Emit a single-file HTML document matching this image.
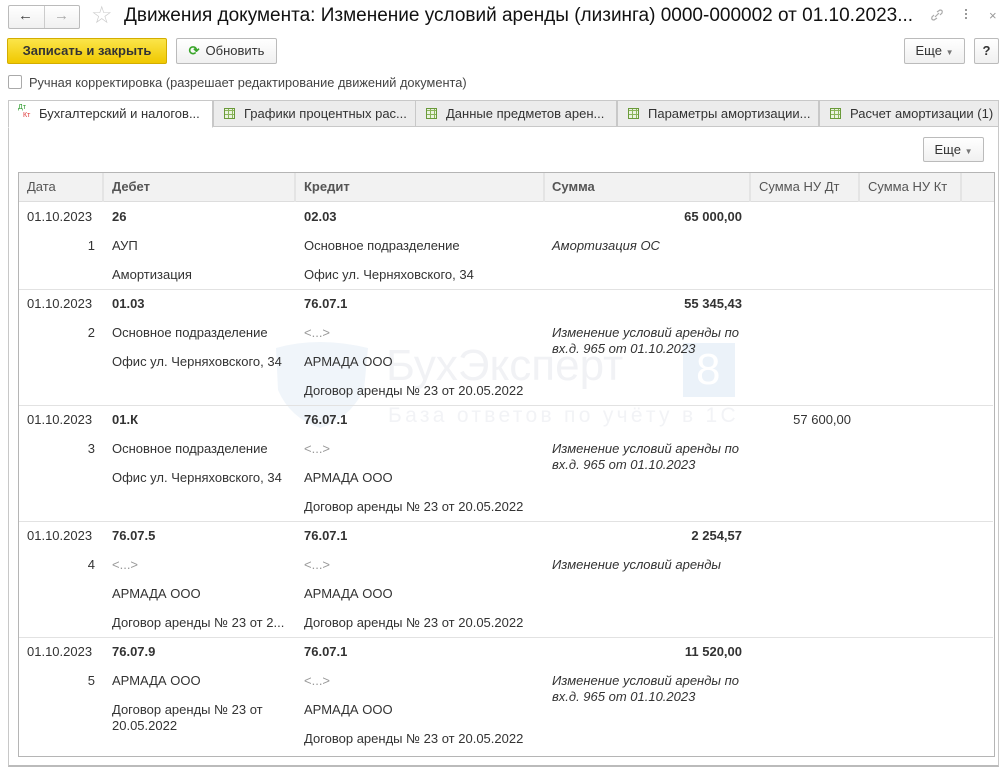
<!DOCTYPE html>
<html><head><meta charset="utf-8"><style>
*{box-sizing:border-box;margin:0;padding:0}
body{width:1006px;height:770px;background:#fff;font-family:"Liberation Sans",Arial,sans-serif;font-size:13px;color:#333;position:relative;overflow:hidden}
.a{position:absolute;white-space:nowrap;line-height:15px}
.b{font-weight:bold}
.i{font-style:italic}
.g{color:#999}
.r{text-align:right}
.btn{position:absolute;border:1px solid #bbb;border-radius:2px;background:linear-gradient(#fff,#f0f0f0);font-size:13px;color:#333;line-height:22px;text-align:center}
.tab{position:absolute;top:100px;height:27px;border:1px solid #c8c8c8;background:#ececec;font-size:13px;line-height:25px;padding-left:10px;color:#333;white-space:nowrap}
.tico{display:inline-block;width:11px;height:11px;border:1px solid #6a9a3a;margin-right:9px;vertical-align:-1px;background:repeating-linear-gradient(90deg,transparent 0 3px,#8ab45a 3px 4px),repeating-linear-gradient(0deg,#eaf3df 0 3px,#8ab45a 3px 4px)}
.hl{position:absolute;top:173px;height:29px;border-right:2px solid #e4e4e4}
.sep{position:absolute;left:19px;width:974px;height:1px;background:#e2e2e2}
</style></head><body>
<!-- header -->
<div class="btn" style="left:8px;top:5px;width:72px;height:24px"></div>
<div style="position:absolute;left:44px;top:6px;width:1px;height:22px;background:#ccc"></div>
<div class="a" style="left:18px;top:8px;font-size:15px;color:#444">&#8592;</div>
<div class="a" style="left:54px;top:8px;font-size:15px;color:#aaa">&#8594;</div>
<div class="a" style="left:91px;top:3px;font-size:24px;color:#ccc;line-height:26px">☆</div>
<div class="a" style="left:124px;top:4px;font-size:19px;line-height:23px;color:#111">Движения документа: Изменение условий аренды (лизинга) 0000-000002 от 01.10.2023...</div>
<svg style="position:absolute;left:929px;top:7px" width="16" height="16"><path d="M6 10 L10 6 M5 8 L3 10 Q2 13 5 13 L8 11 M11 8 L13 6 Q14 3 11 3 L8 5" stroke="#aaa" fill="none" stroke-width="1.2"/></svg>
<div style="position:absolute;left:965px;top:9px;width:2px;height:2px;background:#999;box-shadow:0 4px #999,0 8px #999"></div>
<div class="a" style="left:989px;top:8px;font-size:13px;color:#999">×</div>

<div class="btn b" style="left:7px;top:38px;width:160px;height:26px;background:linear-gradient(#fbe54a,#f0c800);border-color:#d3ad00;line-height:24px;color:#333">Записать и закрыть</div>
<div class="btn" style="left:176px;top:38px;width:101px;height:26px;line-height:24px"><span style="color:#3aa52a;font-weight:bold;margin-right:6px">⟳</span>Обновить</div>
<div class="btn" style="left:904px;top:38px;width:61px;height:26px;line-height:24px">Еще <span style="font-size:8px;color:#777">▼</span></div>
<div class="btn b" style="left:974px;top:38px;width:25px;height:26px;line-height:24px">?</div>

<div style="position:absolute;left:8px;top:75px;width:14px;height:14px;border:1px solid #aaa;border-radius:2px;background:#fff"></div>
<div class="a" style="left:29px;top:75px;font-size:12.8px;color:#444;line-height:15px">Ручная корректировка (разрешает редактирование движений документа)</div>

<!-- tabs -->
<div style="position:absolute;left:8px;top:126px;width:991px;height:641px;border:1px solid #c8c8c8;border-bottom:2px solid #bbb"></div>
<div class="tab" style="left:8px;width:205px;background:#fff;border-bottom-color:#fff;height:28px"><span style="position:absolute;left:9px;top:3px;font-size:7px;line-height:8px;color:#2a9a2a">Дт</span><span style="position:absolute;left:14px;top:11px;font-size:7px;line-height:8px;color:#d33">Кт</span><span style="margin-left:20px">Бухгалтерский и налогов...</span></div>
<div class="tab" style="left:213px;width:203px"><span class="tico"></span>Графики процентных рас...</div>
<div class="tab" style="left:415px;width:202px"><span class="tico"></span>Данные предметов арен...</div>
<div class="tab" style="left:617px;width:202px"><span class="tico"></span>Параметры амортизации...</div>
<div class="tab" style="left:819px;width:180px"><span class="tico"></span>Расчет амортизации (1)</div>

<div class="btn" style="left:923px;top:137px;width:61px;height:25px;line-height:23px">Еще <span style="font-size:8px;color:#777">▼</span></div>

<!-- watermark -->
<svg style="position:absolute;left:268px;top:340px" width="110" height="90"><path d="M8 8 Q50 -4 100 8 L96 50 Q80 80 52 88 Q22 78 10 50 Z" fill="#f0f5fa"/></svg>
<div class="a" style="left:386px;top:341px;font-size:44px;line-height:50px;color:#f1f2f5">БухЭксперт</div>
<div style="position:absolute;left:683px;top:343px;width:52px;height:54px;background:#ebf2f9"></div>
<div class="a" style="left:696px;top:343px;font-size:44px;line-height:54px;color:#fff">8</div>
<div class="a" style="left:388px;top:404px;font-size:21px;line-height:24px;color:#f2f3f6;letter-spacing:3.3px">База ответов по учёту в 1С</div>

<!-- table -->
<div style="position:absolute;left:18px;top:172px;width:977px;height:585px;border:1px solid #b5b5b5"></div>
<div style="position:absolute;left:19px;top:173px;width:975px;height:29px;background:#f2f2f2;border-bottom:1px solid #ddd"></div>
<div class="hl" style="left:102px"></div><div class="hl" style="left:294px"></div><div class="hl" style="left:543px"></div><div class="hl" style="left:749px"></div><div class="hl" style="left:858px"></div><div class="hl" style="left:960px"></div>
<div class="a" style="left:27px;top:179px;color:#555">Дата</div>
<div class="a b" style="left:112px;top:179px;color:#555">Дебет</div>
<div class="a b" style="left:304px;top:179px;color:#555">Кредит</div>
<div class="a b" style="left:552px;top:179px;color:#555">Сумма</div>
<div class="a" style="left:759px;top:179px;color:#555">Сумма НУ Дт</div>
<div class="a" style="left:868px;top:179px;color:#555">Сумма НУ Кт</div>

<div class="sep" style="top:289px"></div><div class="sep" style="top:405px"></div><div class="sep" style="top:521px"></div><div class="sep" style="top:637px"></div>

<!-- row1 -->
<div class="a" style="left:27px;top:209px">01.10.2023</div>
<div class="a b" style="left:112px;top:209px">26</div>
<div class="a b" style="left:304px;top:209px">02.03</div>
<div class="a b r" style="left:600px;width:142px;top:209px">65 000,00</div>
<div class="a r" style="left:60px;width:35px;top:238px">1</div>
<div class="a" style="left:112px;top:238px">АУП</div>
<div class="a" style="left:304px;top:238px">Основное подразделение</div>
<div class="a i" style="left:552px;top:238px">Амортизация ОС</div>
<div class="a" style="left:112px;top:267px">Амортизация</div>
<div class="a" style="left:304px;top:267px">Офис ул. Черняховского, 34</div>

<!-- row2 -->
<div class="a" style="left:27px;top:296px">01.10.2023</div>
<div class="a b" style="left:112px;top:296px">01.03</div>
<div class="a b" style="left:304px;top:296px">76.07.1</div>
<div class="a b r" style="left:600px;width:142px;top:296px">55 345,43</div>
<div class="a r" style="left:60px;width:35px;top:325px">2</div>
<div class="a" style="left:112px;top:325px">Основное подразделение</div>
<div class="a g" style="left:304px;top:325px">&lt;...&gt;</div>
<div class="a i" style="left:552px;top:325px;line-height:16px">Изменение условий аренды по<br>вх.д. 965 от 01.10.2023</div>
<div class="a" style="left:112px;top:354px">Офис ул. Черняховского, 34</div>
<div class="a" style="left:304px;top:354px">АРМАДА ООО</div>
<div class="a" style="left:304px;top:383px">Договор аренды № 23 от 20.05.2022</div>

<!-- row3 -->
<div class="a" style="left:27px;top:412px">01.10.2023</div>
<div class="a b" style="left:112px;top:412px">01.К</div>
<div class="a b" style="left:304px;top:412px">76.07.1</div>
<div class="a r" style="left:751px;width:100px;top:412px">57 600,00</div>
<div class="a r" style="left:60px;width:35px;top:441px">3</div>
<div class="a" style="left:112px;top:441px">Основное подразделение</div>
<div class="a g" style="left:304px;top:441px">&lt;...&gt;</div>
<div class="a i" style="left:552px;top:441px;line-height:16px">Изменение условий аренды по<br>вх.д. 965 от 01.10.2023</div>
<div class="a" style="left:112px;top:470px">Офис ул. Черняховского, 34</div>
<div class="a" style="left:304px;top:470px">АРМАДА ООО</div>
<div class="a" style="left:304px;top:499px">Договор аренды № 23 от 20.05.2022</div>

<!-- row4 -->
<div class="a" style="left:27px;top:528px">01.10.2023</div>
<div class="a b" style="left:112px;top:528px">76.07.5</div>
<div class="a b" style="left:304px;top:528px">76.07.1</div>
<div class="a b r" style="left:600px;width:142px;top:528px">2 254,57</div>
<div class="a r" style="left:60px;width:35px;top:557px">4</div>
<div class="a g" style="left:112px;top:557px">&lt;...&gt;</div>
<div class="a g" style="left:304px;top:557px">&lt;...&gt;</div>
<div class="a i" style="left:552px;top:557px">Изменение условий аренды</div>
<div class="a" style="left:112px;top:586px">АРМАДА ООО</div>
<div class="a" style="left:304px;top:586px">АРМАДА ООО</div>
<div class="a" style="left:112px;top:615px">Договор аренды № 23 от 2...</div>
<div class="a" style="left:304px;top:615px">Договор аренды № 23 от 20.05.2022</div>

<!-- row5 -->
<div class="a" style="left:27px;top:644px">01.10.2023</div>
<div class="a b" style="left:112px;top:644px">76.07.9</div>
<div class="a b" style="left:304px;top:644px">76.07.1</div>
<div class="a b r" style="left:600px;width:142px;top:644px">11 520,00</div>
<div class="a r" style="left:60px;width:35px;top:673px">5</div>
<div class="a" style="left:112px;top:673px">АРМАДА ООО</div>
<div class="a g" style="left:304px;top:673px">&lt;...&gt;</div>
<div class="a i" style="left:552px;top:673px;line-height:16px">Изменение условий аренды по<br>вх.д. 965 от 01.10.2023</div>
<div class="a" style="left:112px;top:702px;line-height:16px">Договор аренды № 23 от<br>20.05.2022</div>
<div class="a" style="left:304px;top:702px">АРМАДА ООО</div>
<div class="a" style="left:304px;top:731px">Договор аренды № 23 от 20.05.2022</div>
</body></html>
